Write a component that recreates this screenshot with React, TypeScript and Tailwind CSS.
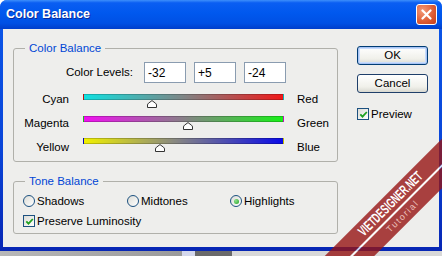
import React from 'react';

type Slider = { left: string; right: string; value: number; gradient: string };

const sliders: Slider[] = [
  { left: 'Cyan', right: 'Red', value: -32, gradient: 'bg-[linear-gradient(90deg,#10e0e0_0%,#7f8585_50%,#f01818_100%)]' },
  { left: 'Magenta', right: 'Green', value: 5, gradient: 'bg-[linear-gradient(90deg,#f010f0_0%,#888088_50%,#18f018_100%)]' },
  { left: 'Yellow', right: 'Blue', value: -24, gradient: 'bg-[linear-gradient(90deg,#f0f000_0%,#8a8a80_45%,#0a0ae8_100%)]' },
];

function Thumb({ value }: { value: number }) {
  return (
    <svg
      width="10"
      height="8"
      viewBox="0 0 10 8"
      className="absolute top-[5px] -translate-x-1/2"
      style={{ left: `${((value + 100) / 200) * 100}%` }}
    >
      <path d="M0.5 7.5 L0.5 5 Q0.5 4 1.5 3.2 L5 0.6 L8.5 3.2 Q9.5 4 9.5 5 L9.5 7.5 Z" fill="#fff" stroke="#333" strokeWidth="1" />
    </svg>
  );
}

function CheckBox() {
  return (
    <span className="flex h-[12px] w-[12px] shrink-0 items-center justify-center border border-[#1c5180] bg-[linear-gradient(135deg,#dcdcd6,#fff)]">
      <svg width="9" height="9" viewBox="0 0 9 9">
        <path d="M1.3 4.3 L3.5 6.6 L7.8 2" fill="none" stroke="#21a121" strokeWidth="1.8" />
      </svg>
    </span>
  );
}

function Radio({ checked }: { checked?: boolean }) {
  return (
    <span className="flex h-[12px] w-[12px] shrink-0 items-center justify-center rounded-full border border-[#1c5180] bg-[linear-gradient(135deg,#dcdcd6,#fff)]">
      {checked && <span className="h-[5px] w-[5px] rounded-full bg-[radial-gradient(circle_at_35%_35%,#8ee08e,#21a121)]" />}
    </span>
  );
}

export default function App() {
  return (
    <div className="relative h-[256px] w-[442px] overflow-hidden bg-white font-['Liberation_Sans',Arial,sans-serif] text-[11.5px] text-black">
      {/* Window */}
      <div className="flex h-[251px] flex-col overflow-hidden rounded-t-[7px] bg-[linear-gradient(180deg,#0b58ea_0%,#0a45d8_60%,#0726b4_100%)]">
        {/* Title bar */}
        <div className="flex h-[29px] shrink-0 items-center justify-between bg-[linear-gradient(180deg,#3d8ffb_0%,#0a5ef2_10%,#0058ee_45%,#0050e4_80%,#003ecb_100%)] pl-[6px] pr-[5px]">
          <span className="text-[12.5px] font-bold text-white [text-shadow:1px_1px_#0a2a9a]">Color Balance</span>
          <span className="flex h-[21px] w-[21px] items-center justify-center rounded-[3px] border border-white bg-[radial-gradient(circle_at_30%_30%,#f39a78,#dd5a32_60%,#c53f1c)]">
            <svg width="11" height="11" viewBox="0 0 11 11">
              <path d="M1.5 1.5 L9.5 9.5 M9.5 1.5 L1.5 9.5" stroke="#fff" strokeWidth="2.2" strokeLinecap="round" />
            </svg>
          </span>
        </div>

        {/* Body */}
        <div className="mx-[3px] mb-[4px] flex flex-1 bg-[#eeeeec] pl-[10px] pt-[12px]">
          <div className="flex w-[325px] flex-col">
            <fieldset className="h-[121px] rounded-[3px] border border-[#b0b0aa]">
              <legend className="ml-[11px] px-[4px] leading-[14px] text-[#0046d5]">Color Balance</legend>
              <div className="mt-[7px] flex items-center">
                <span className="w-[119px] text-right">Color Levels:</span>
                <div className="ml-[11px] flex gap-[8px]">
                  {['-32', '+5', '-24'].map((v) => (
                    <span key={v} className="flex h-[21px] w-[42px] items-center border border-[#8a9cb0] bg-white px-[3px] text-[12px]">
                      {v}
                    </span>
                  ))}
                </div>
              </div>
              <div className="mt-[9px] flex">
                <div className="flex w-[55px] flex-col gap-[10px] text-right leading-[14px]">
                  {sliders.map((s) => (
                    <span key={s.left}>{s.left}</span>
                  ))}
                </div>
                <div className="ml-[14px] flex w-[201px] flex-col gap-[16px] pt-[2px]">
                  {sliders.map((s) => (
                    <div key={s.left} className={`relative h-[6px] border border-black/20 ${s.gradient}`}>
                      <Thumb value={s.value} />
                    </div>
                  ))}
                </div>
                <div className="ml-[13px] flex flex-col gap-[10px] leading-[14px]">
                  {sliders.map((s) => (
                    <span key={s.right}>{s.right}</span>
                  ))}
                </div>
              </div>
            </fieldset>

            <fieldset className="mt-[12px] h-[60px] rounded-[3px] border border-[#b0b0aa]">
              <legend className="ml-[11px] px-[4px] leading-[14px] text-[#0046d5]">Tone Balance</legend>
              <div className="mt-[6px] flex pl-[9px] leading-[14px]">
                <label className="flex w-[104px] items-center gap-[2px]">
                  <Radio /> Shadows
                </label>
                <label className="flex w-[103px] items-center gap-[2px]">
                  <Radio /> Midtones
                </label>
                <label className="flex items-center gap-[2px]">
                  <Radio checked /> Highlights
                </label>
              </div>
              <label className="mt-[6px] flex items-center gap-[2px] pl-[9px] leading-[14px]">
                <CheckBox /> Preserve Luminosity
              </label>
            </fieldset>
          </div>

          {/* Buttons */}
          <div className="ml-[19px] flex w-[71px] flex-col pt-[5px]">
            <button className="flex h-[19px] items-center justify-center rounded-[3px] border border-[#003c74] bg-[linear-gradient(180deg,#ffffff,#f0f0ea_70%,#d8d8d0)] shadow-[inset_0_0_0_1px_#a8c4f4,inset_0_0_0_2px_#c8dcfc]">
              OK
            </button>
            <button className="mt-[9px] flex h-[19px] items-center justify-center rounded-[3px] border border-[#1f3f6a] bg-[linear-gradient(180deg,#ffffff,#f0f0ea_70%,#d8d8d0)]">
              Cancel
            </button>
            <label className="mt-[14px] flex items-center gap-[2px] leading-[14px]">
              <CheckBox /> Preview
            </label>
          </div>
        </div>
      </div>

      {/* Bottom strip behind the window */}
      <div className="flex h-[5px]">
        <div className="w-[182px] bg-[linear-gradient(90deg,#b8b8b8,#9a9a9a)]" />
        <div className="w-[13px] bg-[#d4d8ec]" />
        <div className="w-[37px] bg-[#6a6a6a]" />
        <div className="flex-1 bg-[#d8d8d8]" />
      </div>

      {/* Watermark ribbon */}
      <div className="pointer-events-none absolute left-[246px] top-[192px] flex h-[35px] w-[300px] rotate-[-45deg] flex-col">
        <div className="flex h-[18px] items-center justify-center bg-[#961414]/80">
          <span className="scale-x-[0.62] text-[14px] font-bold leading-none text-white">VIETDESIGNER.NET</span>
        </div>
        <div className="h-[2px] bg-white/80" />
        <div className="flex h-[15px] items-center justify-center bg-[#961414]/80">
          <span className="text-[9px] leading-none tracking-[1.5px] text-[#ecc0bd]">Tutorial</span>
        </div>
      </div>
    </div>
  );
}
